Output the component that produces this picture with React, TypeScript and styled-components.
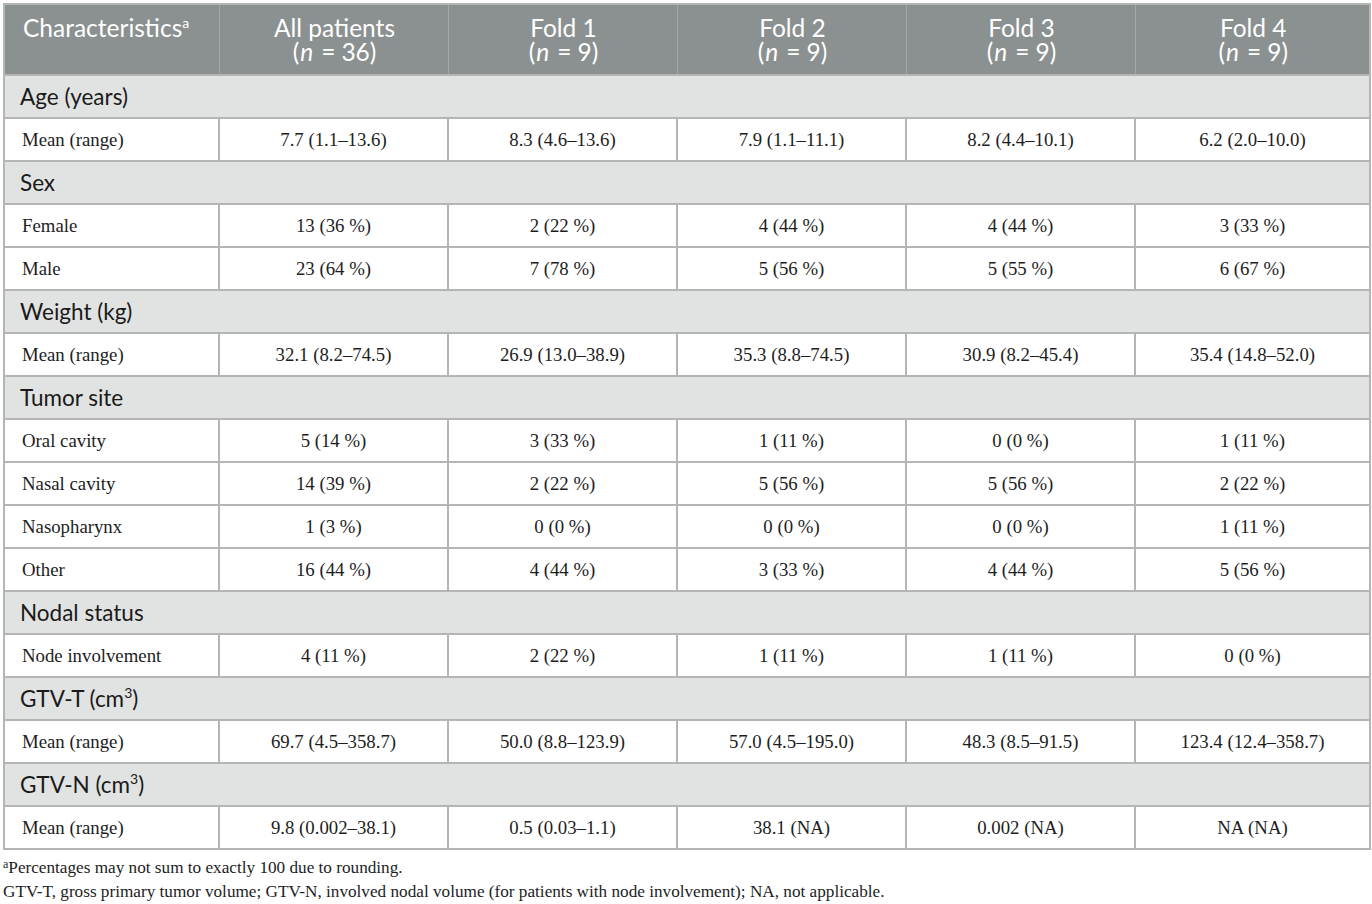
import { Fragment } from 'react';
import type { ReactNode } from 'react';
import styled, { createGlobalStyle } from 'styled-components';

const Global = createGlobalStyle`
  html, body {
    margin: 0;
    padding: 0;
    background: #ffffff;
  }
`;

const Page = styled.div`
  padding: 3px 3px 0 3px;
  width: 1366px;
`;

const Table = styled.table`
  width: 1366px;
  border-collapse: collapse;
  table-layout: fixed;
  border: 2px solid #b3b6b5;
`;

const Col = styled.col<{ $w: number }>`
  width: ${(p) => p.$w}px;
`;

const HeadCell = styled.th<{ $left?: boolean }>`
  background: #8b9090;
  color: #ffffff;
  font-family: Lato, 'Noto Sans', sans-serif;
  font-weight: 400;
  font-size: 24.5px;
  line-height: 24px;
  text-align: ${(p) => (p.$left ? 'left' : 'center')};
  vertical-align: top;
  padding: 11px 16px 6px 18px;
  height: 71px;
  box-sizing: border-box;
  border-left: 1px solid #a3a7a6;

  &:first-child {
    border-left: none;
  }

  sup {
    font-size: 14px;
    vertical-align: 9px;
    line-height: 0;
  }
`;

const HeadLine = styled.span`
  display: block;
`;

const Italic = styled.i`
  font-style: italic;
  margin: 0 2px 0 1px;
`;

const Eq = styled.span`
  margin: 0 6px;
`;

const SectionCell = styled.td`
  background: #e1e3e2;
  color: #1a1a1a;
  font-family: Lato, 'Noto Sans', sans-serif;
  font-size: 22.5px;
  height: 43px;
  box-sizing: border-box;
  padding: 0 15px;
  border-top: 2px solid #b3b6b5;
  border-bottom: 2px solid #b3b6b5;

  sup {
    font-size: 14px;
    vertical-align: 9px;
    line-height: 0;
  }
`;

const DataCell = styled.td<{ $left?: boolean }>`
  font-family: 'Liberation Serif', 'DejaVu Serif', serif;
  font-size: 18.8px;
  color: #1d1d1d;
  height: 43px;
  box-sizing: border-box;
  padding: 0 17px;
  text-align: ${(p) => (p.$left ? 'left' : 'center')};
  border: 2px solid #b3b6b5;
`;

const Notes = styled.div`
  font-family: 'Liberation Serif', 'DejaVu Serif', serif;
  font-size: 17.2px;
  color: #1d1d1d;
  padding-top: 6px;
  line-height: 24px;

  sup {
    font-size: 12px;
    vertical-align: 5px;
    line-height: 0;
  }
`;

type Row = [string, string, string, string, string, string];

interface Section {
  title: ReactNode;
  rows: Row[];
}

const sections: Section[] = [
  {
    title: 'Age (years)',
    rows: [['Mean (range)', '7.7 (1.1–13.6)', '8.3 (4.6–13.6)', '7.9 (1.1–11.1)', '8.2 (4.4–10.1)', '6.2 (2.0–10.0)']],
  },
  {
    title: 'Sex',
    rows: [
      ['Female', '13 (36 %)', '2 (22 %)', '4 (44 %)', '4 (44 %)', '3 (33 %)'],
      ['Male', '23 (64 %)', '7 (78 %)', '5 (56 %)', '5 (55 %)', '6 (67 %)'],
    ],
  },
  {
    title: 'Weight (kg)',
    rows: [['Mean (range)', '32.1 (8.2–74.5)', '26.9 (13.0–38.9)', '35.3 (8.8–74.5)', '30.9 (8.2–45.4)', '35.4 (14.8–52.0)']],
  },
  {
    title: 'Tumor site',
    rows: [
      ['Oral cavity', '5 (14 %)', '3 (33 %)', '1 (11 %)', '0 (0 %)', '1 (11 %)'],
      ['Nasal cavity', '14 (39 %)', '2 (22 %)', '5 (56 %)', '5 (56 %)', '2 (22 %)'],
      ['Nasopharynx', '1 (3 %)', '0 (0 %)', '0 (0 %)', '0 (0 %)', '1 (11 %)'],
      ['Other', '16 (44 %)', '4 (44 %)', '3 (33 %)', '4 (44 %)', '5 (56 %)'],
    ],
  },
  {
    title: 'Nodal status',
    rows: [['Node involvement', '4 (11 %)', '2 (22 %)', '1 (11 %)', '1 (11 %)', '0 (0 %)']],
  },
  {
    title: (
      <>
        GTV-T (cm<sup>3</sup>)
      </>
    ),
    rows: [['Mean (range)', '69.7 (4.5–358.7)', '50.0 (8.8–123.9)', '57.0 (4.5–195.0)', '48.3 (8.5–91.5)', '123.4 (12.4–358.7)']],
  },
  {
    title: (
      <>
        GTV-N (cm<sup>3</sup>)
      </>
    ),
    rows: [['Mean (range)', '9.8 (0.002–38.1)', '0.5 (0.03–1.1)', '38.1 (NA)', '0.002 (NA)', 'NA (NA)']],
  },
];

const groups: [string, number][] = [
  ['All patients', 36],
  ['Fold 1', 9],
  ['Fold 2', 9],
  ['Fold 3', 9],
  ['Fold 4', 9],
];

const colWidths = [215, 229, 229, 229, 229, 235];

export default function App() {
  return (
    <Page>
      <Global />
      <Table>
        <colgroup>
          {colWidths.map((w, i) => (
            <Col key={i} $w={w} />
          ))}
        </colgroup>
        <thead>
          <tr>
            <HeadCell $left>
              Characteristics<sup>a</sup>
            </HeadCell>
            {groups.map(([label, n]) => (
              <HeadCell key={label}>
                <HeadLine>{label}</HeadLine>
                <HeadLine>
                  (<Italic>n</Italic>
                  <Eq>=</Eq>
                  {n})
                </HeadLine>
              </HeadCell>
            ))}
          </tr>
        </thead>
        <tbody>
          {sections.map((section, si) => (
            <Fragment key={si}>
              <tr>
                <SectionCell colSpan={6}>{section.title}</SectionCell>
              </tr>
              {section.rows.map((row, ri) => (
                <tr key={ri}>
                  {row.map((cell, ci) => (
                    <DataCell key={ci} $left={ci === 0}>
                      {cell}
                    </DataCell>
                  ))}
                </tr>
              ))}
            </Fragment>
          ))}
        </tbody>
      </Table>
      <Notes>
        <div>
          <sup>a</sup>Percentages may not sum to exactly 100 due to rounding.
        </div>
        <div>
          GTV-T, gross primary tumor volume; GTV-N, involved nodal volume (for patients with node involvement); NA, not applicable.
        </div>
      </Notes>
    </Page>
  );
}
